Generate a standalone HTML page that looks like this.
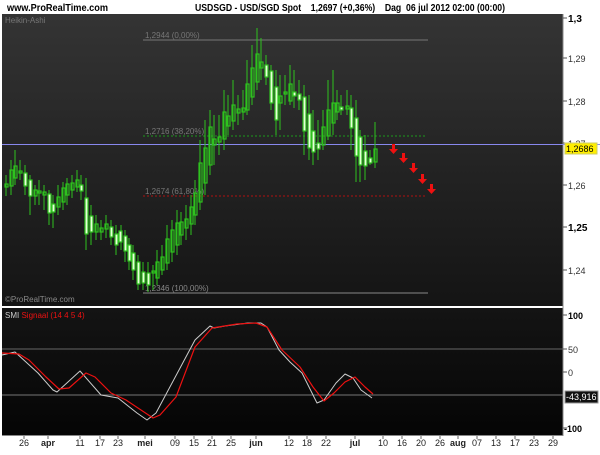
<!DOCTYPE html>
<html><head><meta charset="utf-8"><style>
body{margin:0;width:600px;height:450px;background:#fff;overflow:hidden;font-family:"Liberation Sans",sans-serif}
</style></head><body>
<svg width="600" height="450" xmlns="http://www.w3.org/2000/svg" font-family="Liberation Sans, sans-serif">
<defs>
<linearGradient id="g" x1="0" y1="0" x2="0" y2="1"><stop offset="0" stop-color="#343434"/><stop offset="1" stop-color="#141414"/></linearGradient>
<linearGradient id="g2" x1="0" y1="0" x2="0" y2="1"><stop offset="0" stop-color="#141414"/><stop offset="1" stop-color="#050505"/></linearGradient>
</defs>
<text x="7" y="11" font-size="10" font-weight="bold" fill="#000" textLength="101" lengthAdjust="spacingAndGlyphs">www.ProRealTime.com</text>
<text x="195" y="11" font-size="10" font-weight="bold" fill="#000" xml:space="preserve" textLength="310" lengthAdjust="spacingAndGlyphs">USDSGD - USD/SGD Spot    1,2697 (+0,36%)    Dag  06 jul 2012 02:00 (00:00)</text>
<rect x="2" y="14" width="561" height="292" fill="url(#g)"/>
<rect x="2" y="308" width="561" height="127" fill="url(#g2)"/>
<line x1="563" y1="14" x2="563" y2="436" stroke="#888"/>
<line x1="2" y1="435.5" x2="563" y2="435.5" stroke="#888"/>
<text x="5" y="23" font-size="8" fill="#777">Heikin-Ashi</text>
<text x="5" y="302" font-size="8" fill="#888">©ProRealTime.com</text>
<line x1="143" y1="40" x2="428" y2="40" stroke="#777"/>
<text x="145" y="38" font-size="8" fill="#777">1,2944 (0,00%)</text>
<line x1="143" y1="136" x2="426" y2="136" stroke="#1c9a1c" stroke-dasharray="2,2"/>
<text x="145" y="134" font-size="8" fill="#777">1,2716 (38,20%)</text>
<line x1="143" y1="196" x2="426" y2="196" stroke="#b01010" stroke-dasharray="2,2"/>
<text x="145" y="194" font-size="8" fill="#777">1,2674 (61,80%)</text>
<line x1="143" y1="293" x2="428" y2="293" stroke="#888"/>
<text x="145" y="291" font-size="8" fill="#888">1,2346 (100,00%)</text>
<line x1="2" y1="144.5" x2="600" y2="144.5" stroke="#8888ee"/>
<g stroke="#2ec21e" stroke-width="1">
<path d="M6 175V196M11 160V195M15 150V185M20 160V180M25 165V195M30 175V215M35 185V205M39 180V205M44 185V210M49 190V225M53 195V228M58 185V215M63 182V210M67 178V205M72 175V198M77 170V192M81 175V200M86 178V250M91 205V245M96 215V240M101 220V240M106 215V238M111 220V245M116 225V255M121 225V250M125 230V262M129 238V270M133 245V280M138 255V290M143 262V290M148 262V292M153 265V290M157 250V285M162 245V275M167 225V270M172 220V262M177 210V255M181 212V245M186 205V240M191 195V235M195 180V225M200 140V210M205 120V195M210 110V175M214 115V165M219 115V155M224 90V150M228 95V135M233 80V130M238 95V125M243 90V120M247 60V115M252 45V105M257 28V90M261 38V80M266 55V85M271 65V110M276 70V135M280 75V130M285 75V105M290 65V105M294 70V108M299 80V110M304 85V155M309 95V160M313 110V165M318 120V160M323 110V150M328 80V140M333 70V135M337 90V120M341 95V115M347 90V115M351 95V150M356 100V182M360 130V182M365 135V180M370 150V165M375 122V168"/>
</g>
<g stroke="#2ec21e" stroke-width="1.2" fill="#e6ffd8">
<rect x="24" y="173" width="3" height="13"/><rect x="29" y="180" width="3" height="16"/><rect x="48" y="194" width="3" height="19"/><rect x="52" y="204" width="3" height="8"/><rect x="80" y="185" width="3" height="6"/><rect x="85" y="198" width="3" height="36"/><rect x="90" y="216" width="3" height="16"/><rect x="110" y="227" width="3" height="10"/><rect x="115" y="234" width="3" height="11"/><rect x="119" y="231" width="3" height="11"/><rect x="124" y="236" width="3" height="15"/><rect x="128" y="245" width="3" height="16"/><rect x="132" y="253" width="3" height="17"/><rect x="137" y="262" width="3" height="22"/><rect x="142" y="272" width="3" height="11"/><rect x="147" y="273" width="3" height="12"/><rect x="265" y="65" width="3" height="12"/><rect x="270" y="71" width="3" height="32"/><rect x="275" y="87" width="3" height="33"/><rect x="293" y="92" width="3" height="4"/><rect x="298" y="94" width="3" height="6"/><rect x="303" y="97" width="3" height="34"/><rect x="308" y="114" width="3" height="34"/><rect x="312" y="131" width="3" height="21"/><rect x="317" y="143" width="3" height="6"/><rect x="340" y="107" width="3" height="3"/><rect x="350" y="108" width="3" height="20"/><rect x="355" y="118" width="3" height="38"/><rect x="359" y="137" width="3" height="28"/><rect x="364" y="151" width="3" height="15"/><rect x="369" y="158" width="3" height="5"/>
</g>
<g stroke="#2ec21e" stroke-width="1.2" fill="none">
<rect x="5" y="184" width="3" height="3"/><rect x="10" y="170" width="3" height="16"/><rect x="14" y="166" width="3" height="12"/><rect x="19" y="171" width="3" height="2"/><rect x="34" y="190" width="3" height="6"/><rect x="38" y="191" width="3" height="2"/><rect x="43" y="192" width="3" height="3"/><rect x="57" y="197" width="3" height="10"/><rect x="62" y="188" width="3" height="14"/><rect x="66" y="184" width="3" height="11"/><rect x="71" y="183" width="3" height="7"/><rect x="76" y="180" width="3" height="7"/><rect x="95" y="224" width="3" height="8"/><rect x="100" y="228" width="3" height="4"/><rect x="105" y="224" width="3" height="5"/><rect x="152" y="271" width="3" height="2"/><rect x="156" y="262" width="3" height="16"/><rect x="161" y="257" width="3" height="13"/><rect x="166" y="239" width="3" height="24"/><rect x="171" y="230" width="3" height="22"/><rect x="176" y="223" width="3" height="22"/><rect x="180" y="222" width="3" height="13"/><rect x="185" y="219" width="3" height="9"/><rect x="190" y="207" width="3" height="17"/><rect x="194" y="193" width="3" height="22"/><rect x="199" y="163" width="3" height="39"/><rect x="204" y="148" width="3" height="35"/><rect x="209" y="127" width="3" height="38"/><rect x="213" y="139" width="3" height="6"/><rect x="218" y="137" width="3" height="5"/><rect x="223" y="112" width="3" height="27"/><rect x="227" y="116" width="3" height="10"/><rect x="232" y="105" width="3" height="16"/><rect x="237" y="109" width="3" height="4"/><rect x="242" y="108" width="3" height="4"/><rect x="246" y="84" width="3" height="26"/><rect x="251" y="68" width="3" height="29"/><rect x="256" y="54" width="3" height="28"/><rect x="260" y="62" width="3" height="6"/><rect x="279" y="96" width="3" height="7"/><rect x="284" y="92" width="3" height="2"/><rect x="289" y="84" width="3" height="17"/><rect x="322" y="127" width="3" height="18"/><rect x="327" y="110" width="3" height="26"/><rect x="332" y="103" width="3" height="20"/><rect x="336" y="103" width="3" height="9"/><rect x="346" y="106" width="3" height="3"/><rect x="374" y="149" width="3" height="13"/>
</g>
<g fill="#ee1111">
<path d="M392 144h3v5h3l-4.5 5l-4.5-5h3z"/><path d="M402 153h3v5h3l-4.5 5l-4.5-5h3z"/><path d="M412 163h3v5h3l-4.5 5l-4.5-5h3z"/><path d="M421 174h3v5h3l-4.5 5l-4.5-5h3z"/><path d="M430 184h3v5h3l-4.5 5l-4.5-5h3z"/>
</g>
<g stroke="#555"><path d="M563 18h4M563 58h4M563 101h4M563 143h4M563 185h4M563 227h4M563 270h4M563 315h4M563 349h4M563 372h4M563 428h4"/></g>
<g font-size="9" fill="#333">
<text x="568" y="22" font-weight="bold" font-size="10" fill="#000">1,3</text>
<text x="568" y="62">1,29</text><text x="568" y="105">1,28</text><text x="568" y="147">1,27</text><text x="568" y="189">1,26</text>
<text x="568" y="231" font-weight="bold" font-size="10" fill="#000">1,25</text><text x="568" y="274">1,24</text>
<text x="568" y="319" font-weight="bold" fill="#000">100</text><text x="568" y="353">50</text><text x="568" y="376">0</text><text x="564" y="432" font-weight="bold" fill="#000">-100</text>
</g>
<rect x="565" y="143" width="32" height="11" fill="#ffee00" stroke="#cccc66"/>
<text x="566" y="152" font-size="9" fill="#000">1,2686</text>
<rect x="565" y="391" width="33" height="12" fill="#111" stroke="#999"/>
<text x="566" y="400" font-size="9" fill="#fff">-43,916</text>
<line x1="2" y1="349" x2="563" y2="349" stroke="#666"/>
<line x1="2" y1="395" x2="563" y2="395" stroke="#777"/>
<text x="5" y="318" font-size="8" fill="#ccc">SMI <tspan fill="#ee1111">Signaal (14 4 5 4)</tspan></text>
<polyline fill="none" stroke="#ccc" stroke-width="1" stroke-linejoin="round" points="2,355 15,352 38,373 53,390 57,392 80,371 101,395 118,398 137,413 147,420 156,413 179,370 195,340 210,326 214,328 225,326 248,323 261,323 267,327 279,350 290,362 302,373 317,403 324,400 336,383 345,374 353,378 361,390 372,398"/>
<polyline fill="none" stroke="#ee1111" stroke-width="1.2" stroke-linejoin="round" points="2,353 19,354 29,360 46,377 59,389 69,388 86,373 95,377 111,393 126,400 153,418 160,415 176,397 195,347 212,328 237,324 256,323 267,327 282,350 300,367 313,387 324,401 334,393 345,382 355,377 365,387 373,394"/>
<g font-size="9" fill="#222" text-anchor="middle">
<text x="24" y="446">26</text><text x="48" y="446" font-weight="bold">apr</text><text x="80" y="446">11</text><text x="100" y="446">17</text><text x="118" y="446">23</text><text x="145" y="446" font-weight="bold">mei</text><text x="175" y="446">09</text><text x="194" y="446">15</text><text x="212" y="446">21</text><text x="231" y="446">25</text><text x="256" y="446" font-weight="bold">jun</text><text x="289" y="446">12</text><text x="307" y="446">18</text><text x="326" y="446">22</text><text x="355" y="446" font-weight="bold">jul</text><text x="383" y="446">10</text><text x="402" y="446">16</text><text x="421" y="446">20</text><text x="440" y="446">26</text><text x="458" y="446" font-weight="bold">aug</text><text x="477" y="446">07</text><text x="496" y="446">13</text><text x="515" y="446">17</text><text x="534" y="446">23</text><text x="553" y="446">29</text>
</g>
<g stroke="#666"><path d="M24 436v3M48 436v3M80 436v3M100 436v3M118 436v3M145 436v3M175 436v3M194 436v3M212 436v3M231 436v3M256 436v3M289 436v3M307 436v3M326 436v3M355 436v3M383 436v3M402 436v3M421 436v3M440 436v3M458 436v3M477 436v3M496 436v3M515 436v3M534 436v3M553 436v3"/></g>
</svg>
</body></html>
